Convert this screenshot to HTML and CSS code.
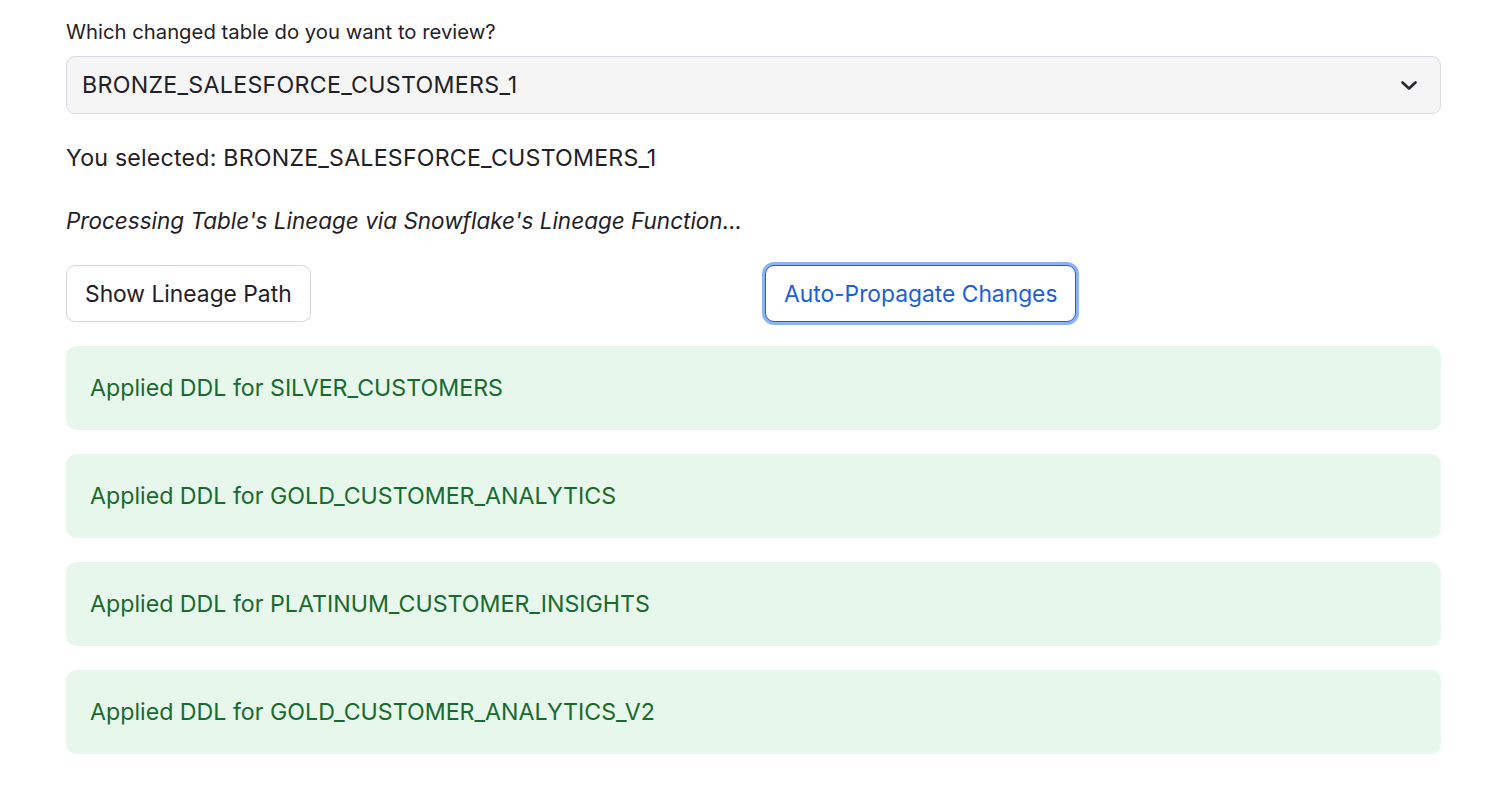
FILE: index.html
```html
<!DOCTYPE html>
<html>
<head>
<meta charset="utf-8">
<link rel="stylesheet" href="styles.css">
</head>
<body>
<main class="page">
  <label class="field-label">Which changed table do you want to review?</label>
  <div class="select">
    <span class="select-value">BRONZE_SALESFORCE_CUSTOMERS_1</span>
    <svg class="chevron" width="18" height="11" viewBox="0 0 18 11"><path d="M2.5 2.5l6.5 6 6.5-6" fill="none" stroke="#262730" stroke-width="2.6" stroke-linecap="round" stroke-linejoin="round"/></svg>
  </div>
  <p class="text caps">You selected: BRONZE_SALESFORCE_CUSTOMERS_1</p>
  <p class="text italic">Processing Table's Lineage via Snowflake's Lineage Function...</p>
  <div class="cols">
    <div class="col"><button class="btn">Show Lineage Path</button></div>
    <div class="col"><button class="btn btn-focus">Auto-Propagate Changes</button></div>
  </div>
  <div class="alert">Applied DDL for SILVER_CUSTOMERS</div>
  <div class="alert">Applied DDL for GOLD_CUSTOMER_ANALYTICS</div>
  <div class="alert">Applied DDL for PLATINUM_CUSTOMER_INSIGHTS</div>
  <div class="alert">Applied DDL for GOLD_CUSTOMER_ANALYTICS_V2</div>
</main>
</body>
</html>
```
FILE: styles.css
```css
* { box-sizing: border-box; }
body {
  margin: 0;
  background: #ffffff;
  font-family: Inter, "Noto Sans", sans-serif;
  color: #1f2128;
}
.page {
  width: 1375px;
  margin-left: 66px;
  padding-top: 20px;
  display: flex;
  flex-direction: column;
}
.field-label {
  font-size: 20.3px;
  line-height: 24px;
  margin-bottom: 12px;
}
.select {
  height: 58px;
  background: #f5f5f6;
  border: 1px solid #d7dae3;
  border-radius: 9px;
  display: flex;
  align-items: center;
  justify-content: space-between;
  padding: 0 22px 0 15px;
  font-size: 23.2px;
  letter-spacing: 0.28px;
}
.text {
  margin: 0;
  font-size: 23.2px;
  line-height: 28px;
}
.caps { letter-spacing: 0.2px; }
.select + .text { margin-top: 30px; }
.italic { font-style: italic; font-size: 22.5px; margin-top: 35px; }
.cols {
  display: grid;
  grid-template-columns: 1fr 1fr;
  column-gap: 23px;
  margin-top: 30px;
  margin-bottom: 24px;
}
.btn {
  font-family: inherit;
  font-size: 22.8px;
  height: 57px;
  padding: 0 18px;
  background: #fff;
  color: #1f2128;
  border: 1px solid #d4d6dc;
  border-radius: 9px;
}
.btn-focus {
  color: #1a5ed9;
  border-color: #1a5ed9;
  box-shadow: 0 0 0 3px #8eb3f5;
}
.alert {
  height: 84px;
  background: #e7f7ec;
  color: #186a2f;
  border-radius: 10px;
  padding: 0 24px;
  display: flex;
  align-items: center;
  font-size: 23.2px;
  margin-bottom: 24px;
}
```
